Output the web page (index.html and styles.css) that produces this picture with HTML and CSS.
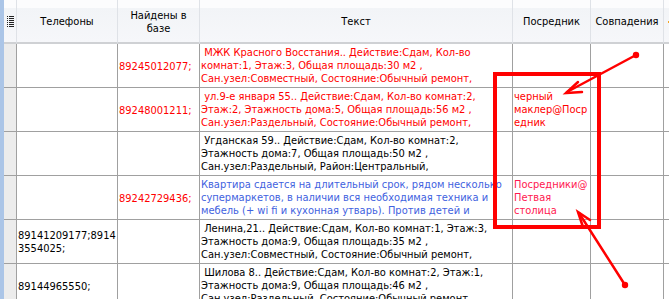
FILE: index.html
```html
<!DOCTYPE html>
<html lang="ru">
<head>
    <meta charset="UTF-8">
    <link rel="stylesheet" href="styles.css">
</head>
<body>

    <div class="grid">
        <table class="data">
            <thead>
                <tr>
                    <th class="ind">
                        <svg class="list-icon" width="7" height="11" viewBox="0 0 7 11">
                            <rect x="0" y="0" width="1" height="1"/><rect x="2" y="0" width="5" height="1"/>
                            <rect x="0" y="2" width="1" height="1"/><rect x="2" y="2" width="5" height="1"/>
                            <rect x="0" y="4" width="1" height="1"/><rect x="2" y="4" width="5" height="1"/>
                            <rect x="0" y="6" width="1" height="1"/><rect x="2" y="6" width="5" height="1"/>
                            <rect x="0" y="8" width="1" height="1"/><rect x="2" y="8" width="5" height="1"/>
                            <rect x="0" y="10" width="1" height="1"/><rect x="2" y="10" width="5" height="1"/>
                        </svg>
                    </th>
                    <th class="c-phones">Телефоны</th>
                    <th class="c-found">Найдены в<br>базе</th>
                    <th class="c-text">Текст</th>
                    <th class="c-agent">Посредник</th>
                    <th class="c-match">Совпадения</th>
                    <th class="c-more"><span class="sort-mark"></span></th>
                </tr>
            </thead>
            <tbody>
                <tr>
                    <td class="ind"></td>
                    <td class="mid"></td>
                    <td class="mid red">89245012077;</td>
                    <td><div class="clip red">
                        <div class="ln">&nbsp;МЖК Красного Восстания.. Действие:Сдам, Кол-во</div>
                        <div class="ln">комнат:1, Этаж:3, Общая площадь:30 м2 ,</div>
                        <div class="ln">Сан.узел:Совместный, Состояние:Обычный ремонт,</div>
                    </div></td>
                    <td></td>
                    <td></td>
                    <td></td>
                </tr>
                <tr>
                    <td class="ind"></td>
                    <td class="mid"></td>
                    <td class="mid red">89248001211;</td>
                    <td><div class="clip red">
                        <div class="ln">&nbsp;ул.9-е января 55.. Действие:Сдам, Кол-во комнат:2,</div>
                        <div class="ln">Этаж:2, Этажность дома:5, Общая площадь:56 м2 ,</div>
                        <div class="ln">Сан.узел:Раздельный, Состояние:Обычный ремонт,</div>
                    </div></td>
                    <td><div class="clip red">
                        <div class="ln">черный</div>
                        <div class="ln">маклер@Поср</div>
                        <div class="ln">едник</div>
                    </div></td>
                    <td></td>
                    <td></td>
                </tr>
                <tr>
                    <td class="ind"></td>
                    <td class="mid"></td>
                    <td class="mid"></td>
                    <td><div class="clip">
                        <div class="ln">&nbsp;Угданская 59.. Действие:Сдам, Кол-во комнат:2,</div>
                        <div class="ln">Этажность дома:7, Общая площадь:50 м2 ,</div>
                        <div class="ln">Сан.узел:Раздельный, Район:Центральный,</div>
                    </div></td>
                    <td></td>
                    <td></td>
                    <td></td>
                </tr>
                <tr>
                    <td class="ind"></td>
                    <td class="mid"></td>
                    <td class="mid red">89242729436;</td>
                    <td><div class="clip blue">
                        <div class="ln">Квартира сдается на длительный срок, рядом несколько</div>
                        <div class="ln">супермаркетов, в наличии вся необходимая техника и</div>
                        <div class="ln">мебель (+ wi fi и кухонная утварь). Против детей и</div>
                    </div></td>
                    <td><div class="clip pink">
                        <div class="ln">Посредники@</div>
                        <div class="ln">Петвая</div>
                        <div class="ln">столица</div>
                    </div></td>
                    <td></td>
                    <td></td>
                </tr>
                <tr>
                    <td class="ind"></td>
                    <td class="mid">89141209177;8914<br>3554025;</td>
                    <td class="mid"></td>
                    <td><div class="clip">
                        <div class="ln">&nbsp;Ленина,21.. Действие:Сдам, Кол-во комнат:1, Этаж:3,</div>
                        <div class="ln">Этажность дома:9, Общая площадь:35 м2 ,</div>
                        <div class="ln">Сан.узел:Совместный, Состояние:Обычный ремонт,</div>
                    </div></td>
                    <td></td>
                    <td></td>
                    <td></td>
                </tr>
                <tr>
                    <td class="ind"></td>
                    <td class="mid">89144965550;</td>
                    <td class="mid"></td>
                    <td><div class="clip">
                        <div class="ln">&nbsp;Шилова 8.. Действие:Сдам, Кол-во комнат:2, Этаж:1,</div>
                        <div class="ln">Этажность дома:9, Общая площадь:46 м2 ,</div>
                        <div class="ln">Сан.узел:Раздельный, Состояние:Обычный ремонт,</div>
                    </div></td>
                    <td></td>
                    <td></td>
                    <td></td>
                </tr>
            </tbody>
        </table>

        <!-- red markup drawn over the grid -->
        <svg class="marks" width="669" height="299" viewBox="0 0 669 299">
            <rect x="495" y="74" width="104" height="153" fill="none" stroke="#ff0000" stroke-width="4"/>
            <g stroke="#ff0000" stroke-width="2.5" stroke-linecap="round" fill="none">
                <line x1="636" y1="55" x2="567" y2="92"/>
                <polyline points="578,82 566,93 582,92"/>
                <line x1="625" y1="285" x2="579" y2="213"/>
                <polyline points="583,227 578,212 590,220"/>
            </g>
            <circle cx="636" cy="55" r="3.2" fill="#ff0000"/>
            <circle cx="625" cy="285" r="3.2" fill="#ff0000"/>
        </svg>
    </div>

</body>
</html>
```

FILE: styles.css
```css
body {
    margin: 0;
    overflow: hidden;
    background-color: #fff;
    font-family: 'DejaVu Sans Condensed', 'DejaVu Sans', sans-serif;
    font-size: 11px;
    color: #000;
}

.grid {
    position: relative;
    height: 299px;
    border-left: 4px solid #abc5e7; /* blue frame on the left */
    overflow: hidden;
}

.data {
    table-layout: fixed;
    width: 700px;
    border-collapse: separate;
    border-spacing: 0;
}

.data th,
.data td {
    box-sizing: border-box;
    padding: 0;
    line-height: 13px;
    overflow: hidden;
}

/* header */
.data th {
    height: 44px;
    font-weight: normal;
    text-align: center;
    vertical-align: middle;
    background: linear-gradient(to bottom, #fcfcfd 0, #fcfcfd 8px, #f2f4f7 8px, #f6f7fa 100%);
    border-right: 1px solid #dfe2e7;
    border-bottom: 2px solid #cfd1d4;
    padding-top: 1px;
}

.data th.ind { width: 13px; border-right-color: #dfe2e7; }
.c-phones { width: 101px; }
.c-found { width: 82px; }
.c-text { width: 313px; }
.c-agent { width: 78px; }
.c-match { width: 73px; }
.c-more { width: 40px; }

.list-icon {
    display: block;
    margin: 0 0 0 3px;
    fill: #222;
}

.sort-mark {
    display: block;
    width: 3px;
    height: 2px;
    margin-left: 4px;
    background-color: #f5a623;
}

/* body */
.data td {
    height: 44px;
    vertical-align: top;
    border-right: 1px solid #a0a0a0;
    border-bottom: 1px solid #a0a0a0;
}

.data td.ind {
    background-color: #ececec;
}

.data td.mid {
    vertical-align: middle;
    padding-left: 1px;
    padding-top: 1px;
}

.clip {
    height: 43px;
    padding: 2px 0 0 1px;
    box-sizing: border-box;
    overflow: hidden;
}

.ln {
    white-space: nowrap;
}

.red { color: #ff0000; }
.pink { color: #ff1850; }
.blue { color: #3f62e0; }

.marks {
    position: absolute;
    top: 0;
    left: -4px;
    pointer-events: none;
}
```
